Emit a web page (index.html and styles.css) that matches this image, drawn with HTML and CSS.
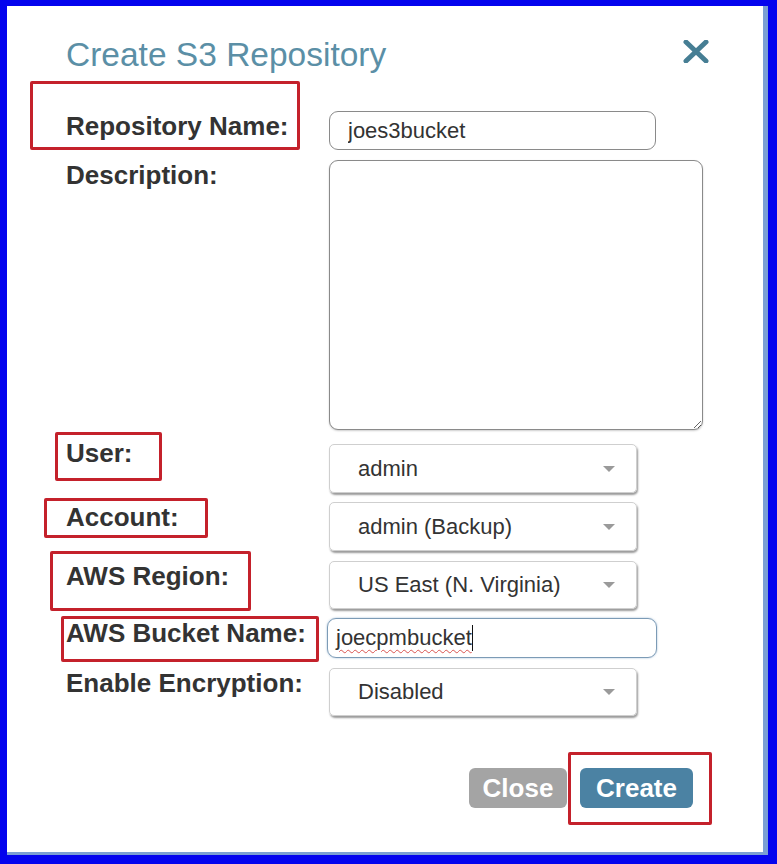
FILE: index.html
```html
<!DOCTYPE html>
<html lang="en">
<head>
  <meta charset="UTF-8" />
  <meta name="viewport" content="width=device-width, initial-scale=1.0" />
  <title>Create S3 Repository</title>
  <link rel="stylesheet" href="styles.css">
</head>

<body>
  <div class="dialog">
    <div class="dialog-header">
      <h1 class="dialog-title">Create S3 Repository</h1>
      <svg class="close-x" width="26" height="23" viewBox="0 0 26 23">
        <path d="M3 2 L23 21 M23 2 L3 21" stroke="#467e94" stroke-width="5" stroke-linecap="round" fill="none" />
      </svg>
    </div>

    <div class="form">
      <div class="row row-name">
        <label class="label"><span class="mark mark-name"></span>Repository Name:</label>
        <input class="text-input name-input" type="text" value="joes3bucket">
      </div>

      <div class="row row-desc">
        <label class="label">Description:</label>
        <textarea class="desc-input"></textarea>
      </div>

      <div class="row row-select row-user">
        <label class="label label-user"><span class="mark mark-user"></span>User:</label>
        <div class="select"><span>admin</span><span class="caret"></span></div>
      </div>

      <div class="row row-select">
        <label class="label"><span class="mark mark-account"></span>Account:</label>
        <div class="select"><span>admin (Backup)</span><span class="caret"></span></div>
      </div>

      <div class="row row-select row-region">
        <label class="label"><span class="mark mark-region"></span>AWS Region:</label>
        <div class="select"><span>US East (N. Virginia)</span><span class="caret"></span></div>
      </div>

      <div class="row row-bucket">
        <label class="label"><span class="mark mark-bucket"></span>AWS Bucket Name:</label>
        <div class="text-input bucket-input"><span class="typed">joecpmbucket</span></div>
      </div>

      <div class="row row-select row-enc">
        <label class="label">Enable Encryption:</label>
        <div class="select"><span>Disabled</span><span class="caret"></span></div>
      </div>
    </div>

    <div class="dialog-footer">
      <button class="btn btn-close">Close</button>
      <button class="btn btn-create"><span class="mark mark-create"></span>Create</button>
    </div>
  </div>
</body>
</html>
```

FILE: styles.css
```css
* {
  box-sizing: border-box;
}
html, body {
  height: 100%;
}
body {
  margin: 0;
  padding: 6px 9px 9px 7px;
  background: #0404ee;
  font-family: "Liberation Sans", Arial, sans-serif;
  color: #333;
}
.dialog {
  height: 100%;
  background: #fff;
  border-right: 5px solid #7b9fd4;
  border-bottom: 3px solid #7b9fd4;
  padding: 30px 0 0 59px;
}
.dialog-header {
  display: flex;
  justify-content: space-between;
  align-items: flex-start;
  padding-right: 54px;
}
.dialog-title {
  margin: 0;
  font-size: 33.5px;
  line-height: 38px;
  font-weight: normal;
  color: #5b8fa6;
}
.close-x {
  margin-top: 4px;
}
.form {
  margin-top: 37px;
}
.row {
  display: grid;
  grid-template-columns: 263px auto;
  align-items: start;
}
.label {
  position: relative;
  font-size: 26px;
  line-height: 30px;
  font-weight: bold;
  color: #333;
}
.label-user {
  margin-top: -6px;
}
.mark {
  position: absolute;
  border: 3px solid #c4212b;
  border-radius: 2px;
}
.mark-name { left: -36px; top: -30px; width: 270px; height: 69px; }
.mark-user { left: -11px; top: -6px; width: 107px; height: 49px; }
.mark-account { left: -22px; top: -4px; width: 164px; height: 40px; }
.mark-region { left: -16px; top: -10px; width: 201px; height: 60px; }
.mark-bucket { left: -5px; top: -2px; width: 258px; height: 46px; }
.mark-create { left: -12px; top: -16px; width: 144px; height: 73px; }

.text-input {
  height: 39px;
  border: 1px solid #8a8a8a;
  border-radius: 9px;
  font-family: inherit;
  font-size: 22px;
  color: #333;
  padding: 0 18px;
}
.name-input {
  width: 327px;
}
.row-desc {
  margin-top: 10px;
}
.desc-input {
  width: 374px;
  height: 270px;
  border: 1px solid #8a8a8a;
  border-radius: 9px;
  box-shadow: 0 1px 2px rgba(0, 0, 0, 0.2);
}
.row-select {
  margin-top: 9px;
}
.row-user {
  margin-top: 14px;
}
.row-region {
  margin-top: 10px;
}
.row-enc {
  margin-top: 10px;
}
.select {
  width: 308px;
  height: 49px;
  display: flex;
  justify-content: space-between;
  align-items: center;
  padding: 0 21px 0 28px;
  border: 1px solid #cfcfcf;
  border-radius: 5px;
  box-shadow: 1px 2px 2px rgba(0, 0, 0, 0.4);
  font-size: 22px;
  color: #333;
}
.row-region .select,
.row-enc .select {
  height: 48px;
}
.caret {
  width: 0;
  height: 0;
  border-left: 6px solid transparent;
  border-right: 6px solid transparent;
  border-top: 6px solid #9a9a9a;
}
.row-bucket {
  margin-top: 9px;
}
.bucket-input {
  width: 330px;
  height: 40px;
  margin-left: -2px;
  display: flex;
  align-items: center;
  padding: 0 8px;
  border: 1px solid #7c9bb6;
  box-shadow: 0 0 2px rgba(80, 130, 180, 0.6);
}
.typed {
  line-height: 26px;
  border-right: 1px solid #111;
  text-decoration: underline wavy #d9534f;
  text-decoration-thickness: 1px;
  text-underline-offset: 4px;
}

.dialog-footer {
  display: flex;
  justify-content: flex-end;
  gap: 13px;
  margin-top: 52px;
  padding-right: 70px;
}
.btn {
  position: relative;
  height: 40px;
  border: none;
  border-radius: 6px;
  color: #fff;
  font-family: inherit;
  font-size: 26px;
  font-weight: bold;
  padding: 0;
}
.btn-close {
  width: 98px;
  background: #a4a4a4;
}
.btn-create {
  width: 113px;
  background: #4b82a3;
}
```
